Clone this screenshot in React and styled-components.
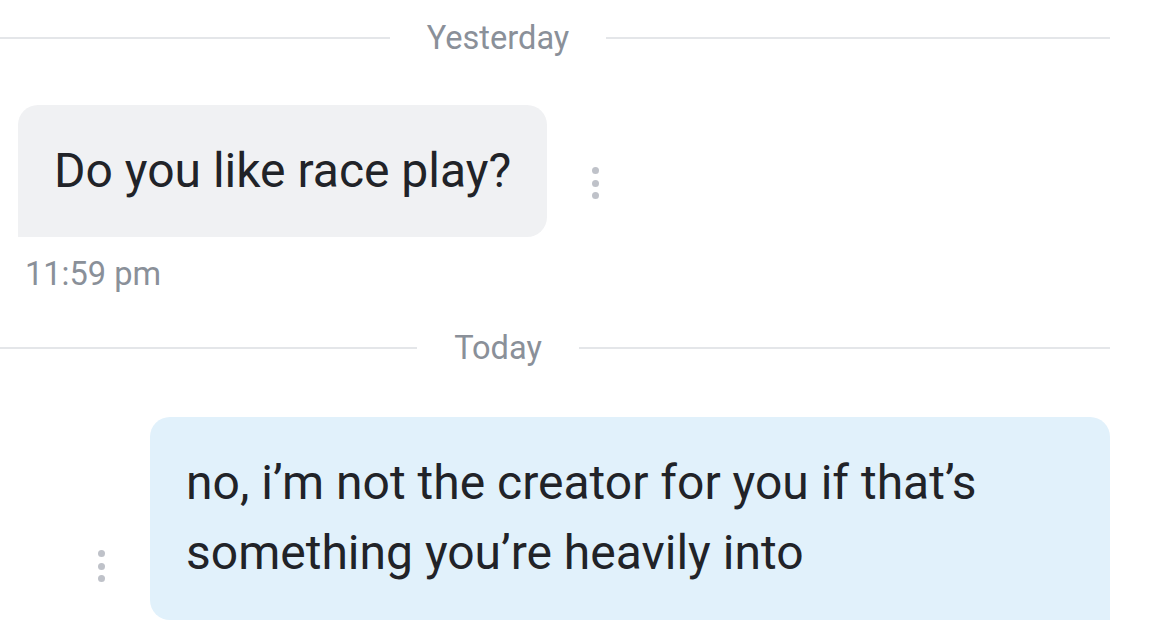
import React from "react";
import styled, { createGlobalStyle } from "styled-components";

const Global = createGlobalStyle`
  html, body {
    margin: 0;
    padding: 0;
    background: #ffffff;
    overflow: hidden;
  }
  body {
    font-family: Roboto, "Liberation Sans", sans-serif;
  }
`;

const Thread = styled.div`
  width: 1110px;
  display: flex;
  flex-direction: column;
`;

const Divider = styled.div`
  display: flex;
  align-items: center;
  margin-left: -114px;
  height: 40px;
  margin-top: ${(p) => p.$top}px;
`;

const Line = styled.div`
  flex: 1;
  height: 2px;
  background: #e4e6e9;
`;

const DayLabel = styled.span`
  padding: 0 37px;
  font-size: 32.6px;
  color: #8a9099;
  line-height: 40px;
`;

const Row = styled.div`
  display: flex;
  align-items: flex-end;
  justify-content: ${(p) => (p.$mine ? "flex-end" : "flex-start")};
  gap: 45px;
  margin-top: ${(p) => p.$top}px;
  padding-left: ${(p) => (p.$mine ? 0 : 18)}px;
`;

const Bubble = styled.div`
  background: ${(p) => (p.$mine ? "#e1f1fb" : "#f0f1f3")};
  color: #212328;
  font-size: 48px;
  line-height: 70px;
  padding: ${(p) => (p.$mine ? "31px 36px 32px" : "31px 36px")};
  border-radius: ${(p) => (p.$mine ? "20px 20px 0 20px" : "20px 20px 20px 0")};
  width: ${(p) => (p.$mine ? "888px" : "auto")};
`;

const Dots = styled.div`
  display: flex;
  flex-direction: column;
  gap: 5.5px;
  margin-bottom: 38px;
  span {
    width: 7px;
    height: 7px;
    border-radius: 50%;
    background: #bfc2c9;
  }
`;

const Time = styled.div`
  font-size: 32.6px;
  color: #8a9099;
  margin: 17px 0 0 25px;
  line-height: 40px;
`;

const More = () => (
  <Dots>
    <span />
    <span />
    <span />
  </Dots>
);

export default function App() {
  return (
    <>
      <Global />
      <Thread>
        <Divider $top={18}>
          <Line />
          <DayLabel>Yesterday</DayLabel>
          <Line />
        </Divider>
        <Row $top={47}>
          <Bubble>Do you like race play?</Bubble>
          <More />
        </Row>
        <Time>11:59 pm</Time>
        <Divider $top={34}>
          <Line />
          <DayLabel>Today</DayLabel>
          <Line />
        </Divider>
        <Row $mine $top={49}>
          <More />
          <Bubble $mine>no, i’m not the creator for you if that’s something you’re heavily into</Bubble>
        </Row>
      </Thread>
    </>
  );
}
